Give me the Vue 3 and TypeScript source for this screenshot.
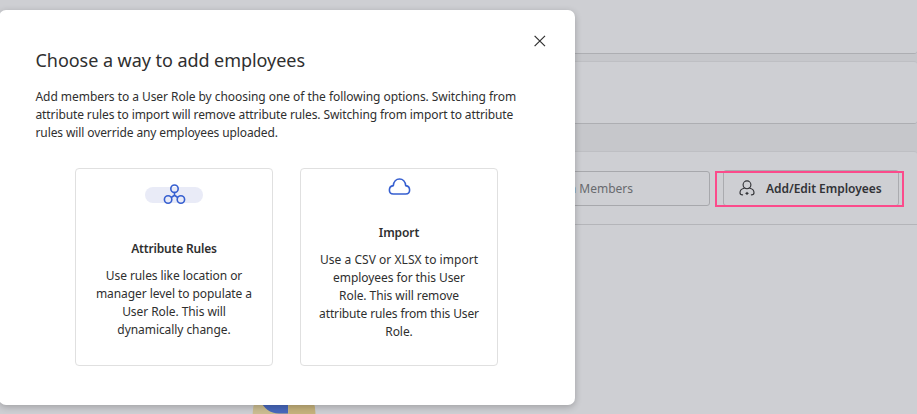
<script setup lang="ts">
interface Option {
  id: string
  title: string
  lines: string[]
}

const intro: string[] = [
  'Add members to a User Role by choosing one of the following options. Switching from',
  'attribute rules to import will remove attribute rules. Switching from import to attribute',
  'rules will override any employees uploaded.',
]

const options: Option[] = [
  {
    id: 'rules',
    title: 'Attribute Rules',
    lines: ['Use rules like location or', 'manager level to populate a', 'User Role. This will', 'dynamically change.'],
  },
  {
    id: 'import',
    title: 'Import',
    lines: ['Use a CSV or XLSX to import', 'employees for this User', 'Role. This will remove', 'attribute rules from this User', 'Role.'],
  },
]
</script>

<template>
  <div class="page">
    <div class="backdrop">
      <header class="panel top"></header>
      <section class="panel summary"></section>
      <section class="panel members">
        <div class="toolbar">
          <div class="search"><span>Search in Members</span></div>
          <button class="edit" type="button">
            <svg class="person" width="16" height="16" viewBox="0 0 16 16" fill="none" stroke="currentColor" stroke-width="1.15" stroke-linecap="round">
              <circle cx="8" cy="4.8" r="3.9" />
              <path d="M5.2 8.2C2.6 8.7 1 10.4 1 12.7C1 14.1 1.7 14.8 3.6 14.8M10.8 8.2C13.4 8.7 15 10.4 15 12.7C15 14.1 14.3 14.8 12.4 14.8" />
              <path d="M8 12.2V14.4M6.9 13.3H9.1" />
            </svg>
            <span>Add/Edit Employees</span>
            <i class="highlight"></i>
          </button>
        </div>
        <div class="empty">
          <svg width="64" height="40" viewBox="0 0 64 40">
            <circle cx="32" cy="19" r="31.3" fill="#cbbd91" />
            <path d="M36.5 0H57Q63.300 8 63.300 19V31H36.500Z" fill="#c5b27c" />
            <path d="M8 6C12 15 18 19 27 19.500H36V0H8Z" fill="#4868bc" />
          </svg>
        </div>
      </section>
    </div>

    <div class="modal" role="dialog">
      <button class="close" type="button" aria-label="Close">
        <svg width="12" height="12" viewBox="0 0 12 12" fill="none" stroke="#303030" stroke-width="1.2">
          <path d="M.6 .8L11 11.200M11 .8L.6 11.200" />
        </svg>
      </button>
      <h1>Choose a way to add employees</h1>
      <p class="intro"><span v-for="line in intro" :key="line">{{ line }}</span></p>
      <div class="options">
        <article v-for="option in options" :key="option.id" class="option" :class="option.id">
          <div class="icon">
            <svg v-if="option.id === 'rules'" width="24" height="22" viewBox="0 0 24 22" fill="none" stroke="#365fd0" stroke-width="1.6">
              <circle cx="12.500" cy="4.700" r="3.700" />
              <circle cx="6.100" cy="15.500" r="3.700" />
              <circle cx="18.900" cy="15.500" r="3.700" />
              <path d="M12.500 8.400V11.300M9.200 13.500L12.500 11.300L15.800 13.500" />
            </svg>
            <svg v-else width="24" height="18" viewBox="0 0 24 18" fill="none" stroke="#365fd0" stroke-width="1.6" stroke-linejoin="round">
              <path d="M6.300 16H18.700C21.200 16 22.600 14.200 22.600 12C22.600 9.600 20.900 7.900 18.700 7.600C18.300 3.800 15.900 1 12.500 1C9.100 1 6.700 3.800 6.300 7.600C4.100 7.900 2.400 9.600 2.400 12C2.400 14.200 3.800 16 6.300 16Z" />
            </svg>
          </div>
          <h2>{{ option.title }}</h2>
          <p><span v-for="line in option.lines" :key="line">{{ line }}</span></p>
        </article>
      </div>
    </div>
  </div>
</template>

<style>
body {
  margin: 0;
  overflow: hidden;
}
</style>

<style scoped>
* {
  box-sizing: border-box;
}
.page {
  position: relative;
  width: 917px;
  height: 414px;
  overflow: hidden;
  background: #c6c7cb;
  color: #2f2f2f;
  font-family: "Noto Sans", "Open Sans", sans-serif;
  font-size: 12px;
}
.backdrop {
  display: flex;
  flex-direction: column;
  height: 414px;
}
.panel {
  flex: none;
  background: #cecfd3;
  border-bottom: 1px solid #adaeb2;
}
.top {
  height: 54px;
  border-radius: 0 0 3px 0;
}
.summary {
  height: 63px;
  margin-top: 7px;
  border-top: 1px solid #bebfc3;
  border-radius: 0 3px 3px 0;
}
.members {
  height: 263px;
  margin-top: 27px;
  border-top: 1px solid #bebfc3;
  border-bottom: 0;
  border-radius: 0 3px 0 0;
}
.toolbar {
  display: flex;
  justify-content: flex-end;
  align-items: flex-start;
  height: 73px;
  padding: 18px 18px 0 0;
  border-bottom: 1px solid #b4b5b9;
}
.search {
  display: flex;
  align-items: center;
  width: 210px;
  height: 35px;
  margin-top: 1px;
  padding-left: 21px;
  border: 1px solid #a7a8ac;
  border-radius: 3px;
  color: #686a6e;
}
.search span {
  width: 111px;
  text-align: right;
  white-space: nowrap;
}
.edit {
  position: relative;
  display: flex;
  align-items: center;
  gap: 11px;
  width: 176px;
  height: 36px;
  margin-left: 13px;
  padding: 0 0 0 15px;
  border: 1px solid #aaabaf;
  border-radius: 3px;
  background: transparent;
  color: #323337;
  font: 600 12px "Noto Sans", sans-serif;
  letter-spacing: -0.04px;
  white-space: nowrap;
}
.highlight {
  position: absolute;
  inset: 0 -6px -2px -9px;
  border: 2px solid #fb4b8b;
}
.empty {
  padding-left: 252px;
  margin-top: 169px;
}
.modal {
  position: absolute;
  top: 10px;
  left: -1px;
  width: 576px;
  height: 395px;
  padding: 38px 0 0 36.5px;
  border-radius: 7px;
  background: #fff;
  box-shadow: 0 2px 7px rgba(0, 0, 0, 0.23);
}
.close {
  position: absolute;
  top: 25px;
  right: 29px;
  display: flex;
  padding: 0;
  border: 0;
  background: none;
}
h1,
h2,
p {
  margin: 0;
}
h1 {
  font-size: 18px;
  line-height: 24px;
  font-weight: 400;
  letter-spacing: -0.05px;
  white-space: nowrap;
}
h1,
.intro span {
  width: max-content;
}
p span {
  display: block;
  white-space: nowrap;
}
.intro {
  margin-top: 16px;
  line-height: 18px;
  letter-spacing: -0.11px;
}
.intro span:first-child {
  letter-spacing: -0.05px;
}
.options {
  display: flex;
  gap: 27px;
  margin: 26px 0 0 39.5px;
}
.option {
  display: flex;
  flex-direction: column;
  align-items: center;
  width: 198px;
  height: 198px;
  border: 1px solid #e0e0e0;
  border-radius: 4px;
  text-align: center;
  line-height: 18px;
}
.icon {
  display: flex;
  align-items: center;
  justify-content: center;
}
.rules .icon {
  width: 58px;
  height: 16px;
  margin-top: 18px;
  border-radius: 8px;
  background: #e9ebf7;
}
.rules .icon svg {
  flex: none;
}
.import .icon {
  height: 18px;
  margin-top: 9px;
}
h2 {
  font-size: 12px;
  line-height: 18px;
  font-weight: 600;
}
.rules h2 {
  margin-top: 37px;
  letter-spacing: -0.18px;
}
.import h2 {
  margin-top: 28px;
  letter-spacing: -0.1px;
}
.option p {
  margin-top: 9px;
  letter-spacing: -0.07px;
}
.import p span:first-child {
  letter-spacing: 0.04px;
}
.import p span:nth-child(4) {
  letter-spacing: -0.14px;
}
</style>
